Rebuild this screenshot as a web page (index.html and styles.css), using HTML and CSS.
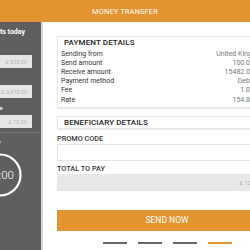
FILE: index.html
```html
<!DOCTYPE html>
<html>
<head>
<meta charset="utf-8">
<link rel="stylesheet" href="styles.css">
</head>
<body>
<div class="app">
  <header class="topbar">MONEY TRANSFER</header>
  <div class="layout">
    <aside class="side">
      <div class="side-title">Your limits today</div>
      <div class="side-input side-first">£ 923.00</div>
      <div class="side-input side-gap">£ 3,475.00</div>
      <div class="side-label">Your balance</div>
      <div class="side-input">£ 10.00</div>
      <div class="side-sep"></div>
      <div class="side-label">Available for</div>
      <div class="timer">
        <svg class="timer-ring" width="44" height="44" viewBox="0 0 44 44">
          <circle cx="22" cy="22" r="20.5" fill="none" stroke="#ffffff" stroke-width="2.2"/>
          <path d="M19.2 1.7 A20.5 20.5 0 0 1 22 1.5" fill="none" stroke="#e3932f" stroke-width="2.4"/>
        </svg>
        <span class="timer-text">10:00</span>
      </div>
    </aside>
    <main class="main">
      <section class="card">
        <h2 class="card-title">PAYMENT DETAILS</h2>
        <div class="rows">
          <div class="row"><span>Sending from</span><span class="val val-wide">United Kingdom</span></div>
          <div class="row"><span>Send amount</span><span class="val">100.00</span></div>
          <div class="row"><span>Receive amount</span><span class="val">15482.00</span></div>
          <div class="row"><span>Payment method</span><span class="val">Debit</span></div>
          <div class="row"><span>Fee</span><span class="val">1.00</span></div>
          <div class="row"><span>Rate</span><span class="val">154.82</span></div>
        </div>
      </section>
      <section class="card card-slim">
        <h2 class="card-title">BENEFICIARY DETAILS</h2>
      </section>
      <div class="field-label">PROMO CODE</div>
      <div class="field"></div>
      <div class="field-label">TOTAL TO PAY</div>
      <div class="field field-total">£ 101.00</div>
      <button class="send">SEND NOW</button>
      <div class="pager"><span></span><span></span><span></span><span class="on"></span></div>
    </main>
  </div>
</div>
</body>
</html>
```

FILE: styles.css
```css
html, body {
  margin: 0;
  padding: 0;
  background: #ffffff;
  overflow: hidden;
}
body {
  font-family: Roboto, "Liberation Sans", sans-serif;
}
.app {
  width: 332px;
  height: 250px;
  margin-left: -41px;
  display: flex;
  flex-direction: column;
}
.topbar {
  height: 22px;
  flex: none;
  background: #e3932f;
  color: #ffffff;
  font-size: 7.5px;
  display: flex;
  align-items: center;
  justify-content: center;
  letter-spacing: 0.1px;
}
.layout {
  flex: 1;
  display: flex;
}
.side {
  width: 84px;
  box-sizing: border-box;
  background: #5f5f5f;
  border-right: 2px solid #d6d6d6;
  padding: 5px 9px 0;
  color: #ffffff;
  display: flex;
  flex-direction: column;
}
.side-title {
  font-size: 7px;
  font-weight: 700;
  line-height: 10px;
  white-space: nowrap;
  padding-left: 4px;
}
.side-label {
  font-size: 6px;
  line-height: 8px;
  margin-top: 6px;
  white-space: nowrap;
}
.side-input {
  height: 13px;
  margin-top: 3px;
  background: #e6e6e6;
  color: #b3b3b3;
  font-size: 5.5px;
  display: flex;
  align-items: center;
  justify-content: flex-end;
  padding-right: 5px;
}
.side-input.side-first {
  margin-top: 18px;
}
.side-input.side-gap {
  margin-top: 17px;
}
.side-sep {
  height: 1px;
  background: #7a7a7a;
  margin: 4px -9px 0;
}
.side-sep + .side-label {
  margin-top: 5px;
}
.timer {
  margin-top: 7px;
  height: 44px;
  display: grid;
  place-items: center;
}
.timer-ring, .timer-text {
  grid-area: 1 / 1;
}
.timer-text {
  font-size: 11.5px;
  font-weight: 300;
  color: #ffffff;
}
.main {
  flex: 1;
  padding: 14px 14px 0;
  display: flex;
  flex-direction: column;
}
.card {
  border: 1px solid #e6e6e6;
  box-shadow: 0 1px 1px rgba(0, 0, 0, 0.06);
  padding: 1px 22px 2px 3px;
}
.card-title {
  margin: 0;
  padding-left: 3px;
  font-size: 8px;
  font-weight: 500;
  line-height: 10px;
  color: #222222;
  letter-spacing: 0.1px;
}
.rows {
  margin-top: 1.5px;
}
.row {
  display: flex;
  justify-content: space-between;
  font-size: 7px;
  line-height: 9.2px;
  color: #333333;
}
.val {
  color: #777777;
}
.val-wide {
  margin-right: -12px;
}
.card-slim {
  margin-top: 8px;
  padding: 1px 3px 0;
}
.field-label {
  margin-top: 6px;
  font-size: 7.3px;
  font-weight: 500;
  line-height: 8px;
  color: #333333;
}
.field {
  margin-top: 1px;
  height: 17px;
  box-sizing: border-box;
  border: 1px solid #e3e3e3;
  background: #ffffff;
}
.field + .field-label {
  margin-top: 4px;
}
.field-total {
  background: #e8e8e8;
  border-color: #e8e8e8;
  color: #b0b0b0;
  font-size: 6px;
  display: flex;
  align-items: center;
  justify-content: flex-end;
  padding-right: 13px;
}
.send {
  margin-top: 19px;
  height: 21px;
  border: none;
  background: #e3932f;
  color: #ffffff;
  font-family: Roboto, "Liberation Sans", sans-serif;
  font-size: 8.5px;
  padding: 0;
}
.pager {
  margin-top: 11px;
  display: flex;
  justify-content: center;
  gap: 11px;
}
.pager span {
  width: 24px;
  height: 2px;
  background: #666666;
}
.pager .on {
  background: #e3932f;
}
```
